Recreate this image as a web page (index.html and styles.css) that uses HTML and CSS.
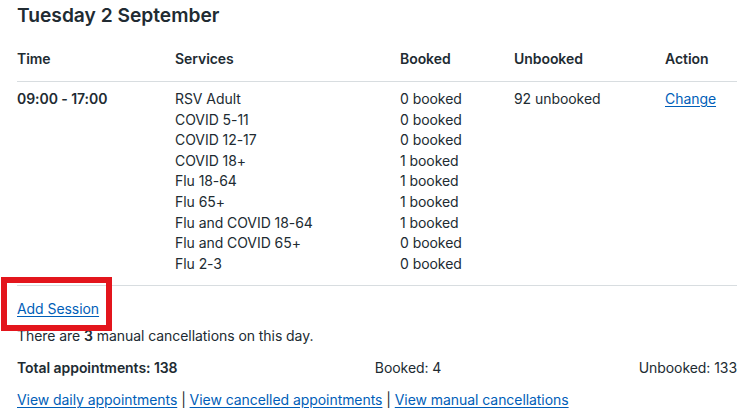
FILE: index.html
```html
<!DOCTYPE html>
<html lang="en">
<head>
<meta charset="utf-8">
<title>Tuesday 2 September</title>
<link rel="stylesheet" href="styles.css">
</head>
<body>
<main class="page">
  <h2 class="day-title">Tuesday 2 September</h2>
  <div class="sessions">
    <div class="row head">
      <div>Time</div>
      <div>Services</div>
      <div>Booked</div>
      <div>Unbooked</div>
      <div>Action</div>
    </div>
    <div class="row body">
      <div class="time">09:00 - 17:00</div>
      <div class="list">
        <span>RSV Adult</span>
        <span>COVID 5-11</span>
        <span>COVID 12-17</span>
        <span>COVID 18+</span>
        <span>Flu 18-64</span>
        <span>Flu 65+</span>
        <span>Flu and COVID 18-64</span>
        <span>Flu and COVID 65+</span>
        <span>Flu 2-3</span>
      </div>
      <div class="list">
        <span>0 booked</span>
        <span>0 booked</span>
        <span>0 booked</span>
        <span>1 booked</span>
        <span>1 booked</span>
        <span>1 booked</span>
        <span>1 booked</span>
        <span>0 booked</span>
        <span>0 booked</span>
      </div>
      <div class="list"><span>92 unbooked</span></div>
      <div class="list"><a href="#" class="link">Change</a></div>
    </div>
  </div>
  <p class="add"><a href="#" class="link add-link">Add Session</a></p>
  <p class="note">There are <strong>3</strong> manual cancellations on this day.</p>
  <div class="totals">
    <strong>Total appointments: 138</strong>
    <span>Booked: 4</span>
    <span>Unbooked: 133</span>
  </div>
  <p class="links"><a href="#" class="link">View daily appointments</a> | <a href="#" class="link">View cancelled appointments</a> | <a href="#" class="link">View manual cancellations</a></p>
</main>
</body>
</html>
```

FILE: styles.css
```css
*, *::before, *::after { box-sizing: border-box; }
html, body { margin: 0; padding: 0; background: #fff; }
body {
  font-family: Inter, "Liberation Sans", Arial, sans-serif;
  font-size: 14px;
  line-height: 20px;
  letter-spacing: -0.06px;
  color: #212b32;
}
.page {
  padding: 0 4px 0 17px;
  width: 741px;
}
.day-title {
  margin: 0;
  font-size: 19.2px;
  line-height: 30px;
  font-weight: 600;
  letter-spacing: 0;
}
.row {
  display: grid;
  grid-template-columns: 158px 225px 114px 151px 1fr;
  border-bottom: 1px solid #d8dde0;
}
.row.head {
  padding: 19px 0 12px;
  font-weight: 600;
}
.row.body {
  padding: 7px 0 11px;
  line-height: 20.6px;
}
.time { font-weight: 600; }
.list { display: flex; flex-direction: column; }
.link { color: #005eb8; text-decoration: underline; text-underline-offset: 2px; }
.add {
  margin: 13px 0 0;
  position: relative;
  display: inline-block;
}
.add-link::after {
  content: "";
  position: absolute;
  left: -16px;
  top: -22px;
  width: 111px;
  height: 54px;
  border: 6px solid #e3151c;
  pointer-events: none;
}
.note { margin: 7px 0 0; }
.note strong { font-weight: 600; }
.totals {
  margin-top: 12px;
  display: flex;
  justify-content: space-between;
}
.totals strong { font-weight: 600; }
.links { margin: 12px 0 0; }
```
